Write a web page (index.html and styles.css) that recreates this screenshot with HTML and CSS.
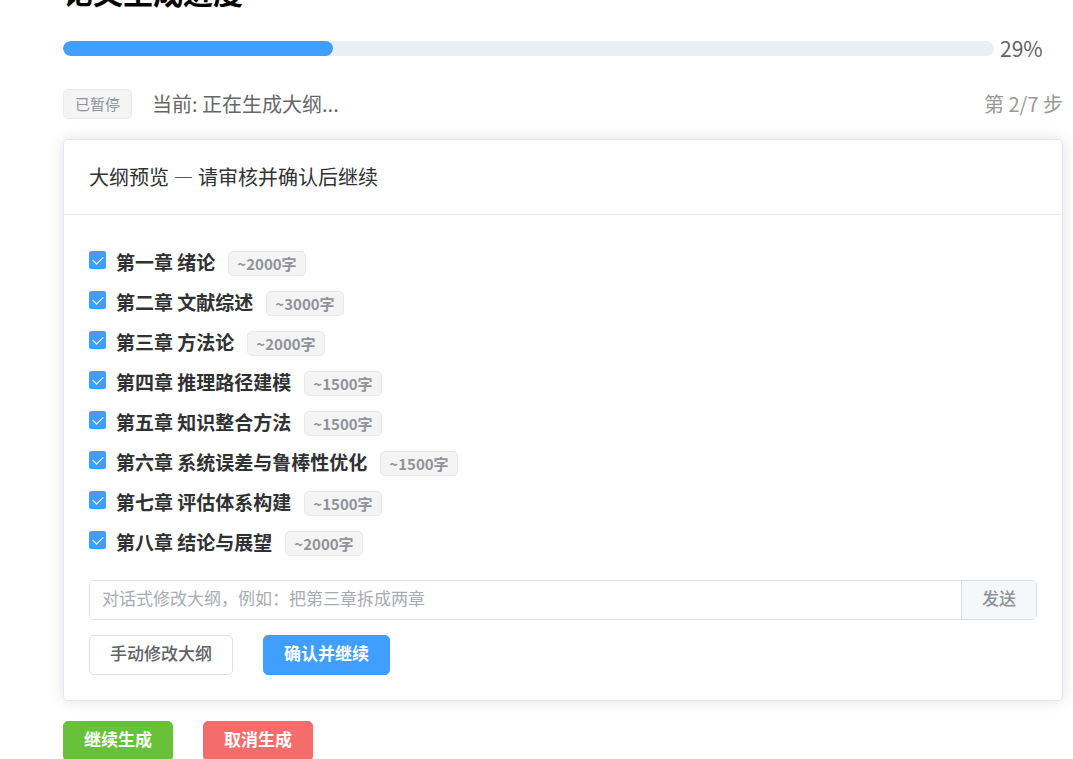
FILE: index.html
```html
<!DOCTYPE html>
<html lang="zh-CN">
<head>
    <meta charset="UTF-8">
    <meta name="viewport" content="width=device-width, initial-scale=1.0">
    <title>论文生成进度</title>
    <link rel="stylesheet" href="styles.css">
</head>
<body>
    <main class="page">
        <h1>论文生成进度</h1>

        <div class="progress">
            <div class="progress-track">
                <div class="progress-bar" style="width: 29%"></div>
            </div>
            <span class="progress-text">29%</span>
        </div>

        <div class="status">
            <span class="tag">已暂停</span>
            <span class="status-text">当前: 正在生成大纲...</span>
            <span class="status-step">第 2/7 步</span>
        </div>

        <section class="card">
            <h2 class="card-header">大纲预览 — 请审核并确认后继续</h2>
            <div class="card-body">
                <ul class="chapters">
                    <li><label><input type="checkbox" checked><span>第一章 绪论</span><span class="tag small">~2000字</span></label></li>
                    <li><label><input type="checkbox" checked><span>第二章 文献综述</span><span class="tag small">~3000字</span></label></li>
                    <li><label><input type="checkbox" checked><span>第三章 方法论</span><span class="tag small">~2000字</span></label></li>
                    <li><label><input type="checkbox" checked><span>第四章 推理路径建模</span><span class="tag small">~1500字</span></label></li>
                    <li><label><input type="checkbox" checked><span>第五章 知识整合方法</span><span class="tag small">~1500字</span></label></li>
                    <li><label><input type="checkbox" checked><span>第六章 系统误差与鲁棒性优化</span><span class="tag small">~1500字</span></label></li>
                    <li><label><input type="checkbox" checked><span>第七章 评估体系构建</span><span class="tag small">~1500字</span></label></li>
                    <li><label><input type="checkbox" checked><span>第八章 结论与展望</span><span class="tag small">~2000字</span></label></li>
                </ul>

                <form class="chat">
                    <input type="text" aria-label="修改大纲" placeholder="对话式修改大纲，例如：把第三章拆成两章">
                    <button type="button">发送</button>
                </form>

                <div class="actions">
                    <button class="btn" type="button">手动修改大纲</button>
                    <button class="btn primary" type="button">确认并继续</button>
                </div>
            </div>
        </section>

        <div class="actions">
            <button class="btn success" type="button">继续生成</button>
            <button class="btn danger" type="button">取消生成</button>
        </div>
    </main>
</body>
</html>
```

FILE: styles.css
```css
* {
    box-sizing: border-box;
}
body {
    margin: 0;
    background-color: #fff;
    color: #303133;
    font-family: "Noto Sans CJK SC", sans-serif;
    font-size: 20px;
    line-height: 30px;
}
button, input {
    font-family: inherit;
    font-size: 17px;
}
button {
    cursor: pointer;
    font-weight: 500;
}
.page {
    padding: 0 10px 30px 63px;
}
h1 {
    margin: -24px 0 27px;
    color: #000;
    font-size: 30px;
    line-height: 30px;
}

/* progress */
.progress {
    display: flex;
    align-items: center;
    gap: 6px;
}
.progress-track {
    flex: 1;
    height: 15px;
    border-radius: 8px;
    background-color: #ebeef5;
    overflow: hidden;
}
.progress-bar {
    height: 100%;
    border-radius: 8px;
    background-color: #409eff;
}
.progress-text {
    width: 63px;
    color: #606266;
    font-size: 21px;
}

/* status line */
.status {
    display: flex;
    align-items: center;
    gap: 20px;
    margin: 26px 0 20px;
}
.status-text {
    color: #666;
}
.status-step {
    margin-left: auto;
    color: #999;
}
.tag {
    padding: 0 11px;
    border: 1px solid #e9e9eb;
    border-radius: 5px;
    background-color: #f4f4f5;
    color: #909399;
    font-size: 15px;
    line-height: 28px;
}
.tag.small {
    margin: 3px 0 0 13px;
    padding: 0 8px;
    line-height: 23px;
}

/* outline card */
.card {
    border: 1px solid #e4e7ed;
    border-radius: 5px;
    box-shadow: 0 0 15px rgba(0, 0, 0, 0.12);
}
.card-header {
    margin: 0;
    padding: 22px 25px;
    border-bottom: 1px solid #e4e7ed;
    font-size: 20px;
    font-weight: 400;
}
.card-body {
    padding: 25px;
}
.chapters {
    margin: 2px 0 18px;
    padding: 0;
    list-style: none;
    font-size: 19px;
    font-weight: 700;
}
.chapters li {
    display: flex;
}
.chapters label {
    display: flex;
    align-items: center;
    height: 40px;
    cursor: pointer;
}
.chapters input {
    display: grid;
    place-items: center;
    appearance: none;
    width: 17px;
    height: 18px;
    margin: 0 10px 4px 0;
    border: 1px solid #409eff;
    border-radius: 2px;
}
.chapters input:checked {
    background-color: #409eff;
}
.chapters input:checked::after {
    content: "";
    width: 5px;
    height: 9px;
    margin-bottom: 3px;
    border: solid #fff;
    border-width: 0 1px 1px 0;
    transform: rotate(45deg);
}

/* chat box */
.chat {
    display: flex;
    height: 40px;
    margin-bottom: 15px;
    border: 1px solid #dcdfe6;
    border-radius: 5px;
    overflow: hidden;
}
.chat input {
    flex: 1;
    min-width: 0;
    padding: 0 12px 6px;
    border: none;
    outline: none;
    color: #606266;
}
.chat input::placeholder {
    color: #a8abb2;
}
.chat button {
    padding: 0 20px 6px;
    border: none;
    border-left: 1px solid #dcdfe6;
    background-color: #f5f7fa;
    color: #909399;
}

/* buttons */
.actions {
    display: flex;
    gap: 30px;
}
.card + .actions {
    margin-top: 20px;
}
.btn {
    height: 40px;
    padding: 0 20px 6px;
    border: 1px solid #dcdfe6;
    border-radius: 5px;
    background-color: #fff;
    color: #606266;
}
.primary, .success, .danger {
    color: #fff;
    font-weight: 700;
}
.primary {
    border-color: #409eff;
    background-color: #409eff;
}
.success {
    border-color: #67c23a;
    background-color: #67c23a;
}
.danger {
    border-color: #f56c6c;
    background-color: #f56c6c;
}
```
